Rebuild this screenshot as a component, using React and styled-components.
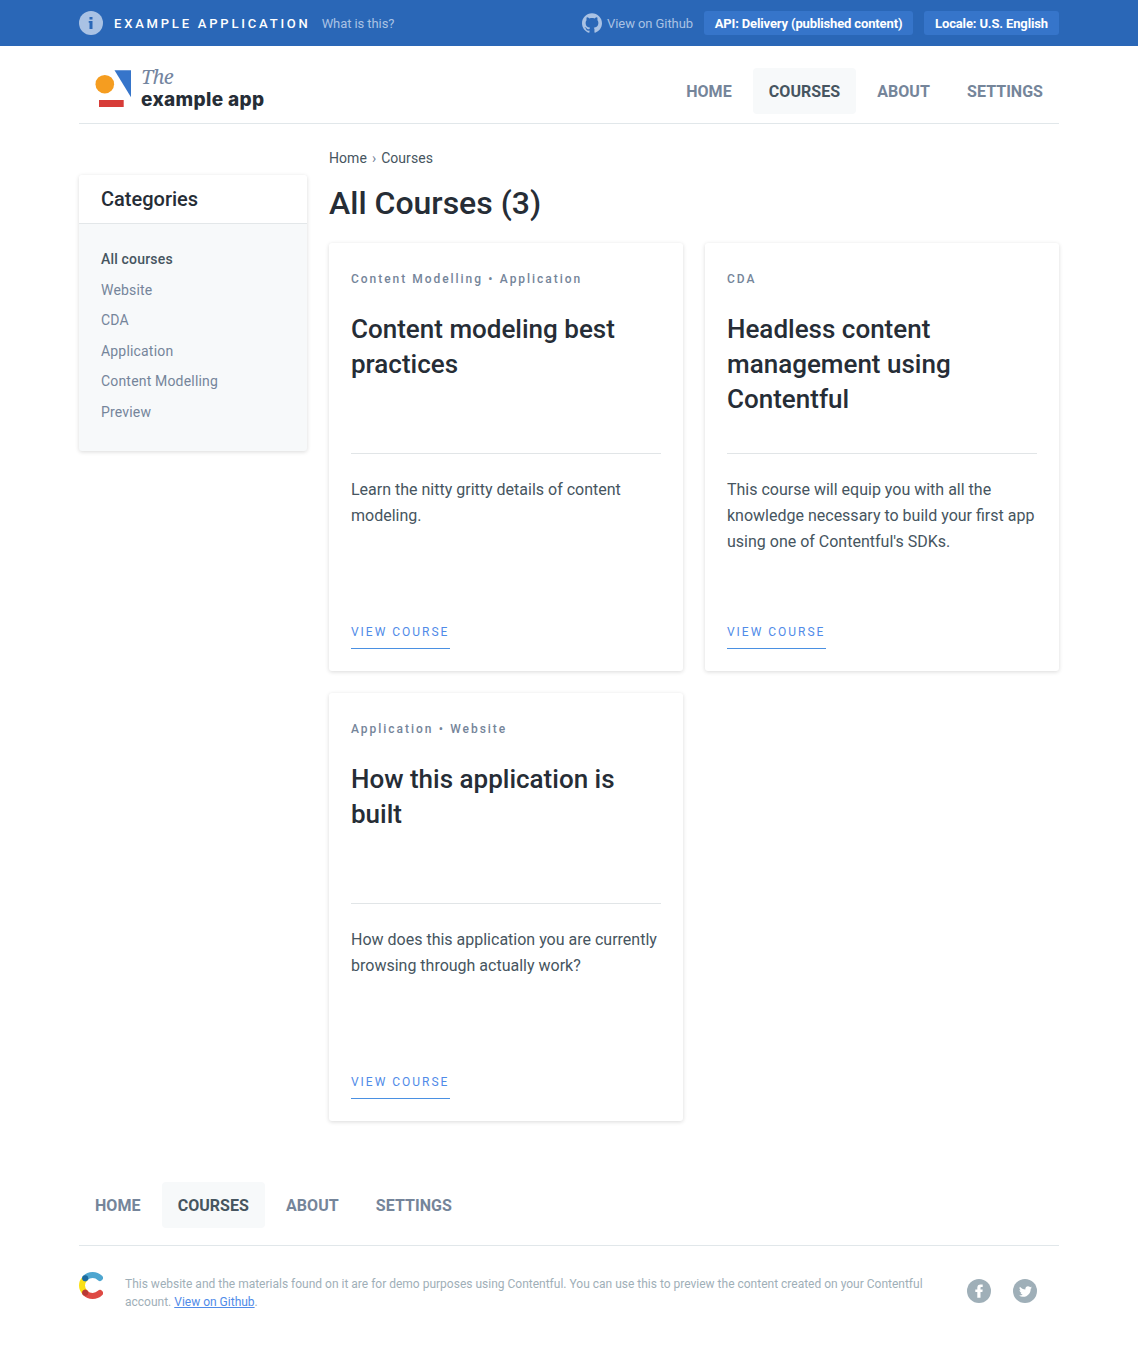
import React from 'react';
import styled, { createGlobalStyle } from 'styled-components';
import { FaTwitter } from 'react-icons/fa';
import { SiGithub } from 'react-icons/si';

const GlobalStyle = createGlobalStyle`
  *, *::before, *::after { box-sizing: border-box; }
  body {
    margin: 0;
    background: #fff;
    color: #465560;
    font-family: Roboto, "Liberation Sans", sans-serif;
    font-size: 16px;
  }
  h1, h2, p, ul { margin: 0; padding: 0; }
  ul { list-style: none; }
  a { color: inherit; text-decoration: none; }
`;

const Wrapper = styled.div`
  width: 980px;
  margin: 0 auto;
`;

const TopBar = styled.div`
  height: 46px;
  background: #2a67b7;
`;

const TopBarInner = styled(Wrapper)`
  height: 100%;
  display: flex;
  align-items: center;
  justify-content: space-between;
  font-size: 13px;
`;

const TopGroup = styled.div`
  display: flex;
  align-items: center;
  gap: 11px;
`;

const AppTitle = styled.span`
  color: #fff;
  font-size: 13px;
  font-weight: 500;
  letter-spacing: 2.8px;
  white-space: nowrap;
`;

const TopLink = styled.a`
  display: flex;
  align-items: center;
  gap: 5px;
  color: #a9c2e4;
  white-space: nowrap;
  letter-spacing: -0.08px;
`;

const TopButton = styled.button`
  height: 24px;
  width: ${({ $width }) => $width};
  padding: 0;
  border: 0;
  border-radius: 3px;
  background: #3675ca;
  color: #fff;
  font: 700 13px Roboto, sans-serif;
  letter-spacing: -0.14px;
  white-space: nowrap;
`;

const Header = styled(Wrapper)`
  height: 78px;
  padding: 22px 0 9px;
  display: flex;
  justify-content: space-between;
  border-bottom: 1px solid #e1e7ea;
`;

const Logo = styled.a`
  display: flex;
  padding-left: 16px;
  gap: 9px;
`;

const LogoMark = styled.svg`
  display: block;
  margin-top: 2px;
`;

const LogoText = styled.span`
  display: flex;
  flex-direction: column;
`;

const LogoThe = styled.span`
  font: italic 400 20px/18px "Noto Serif", "Liberation Serif", serif;
  letter-spacing: -0.8px;
  color: #7485a0;
`;

const LogoName = styled.span`
  font: 800 19px/27px Inter, sans-serif;
  letter-spacing: 0.35px;
  color: #262d36;
  white-space: nowrap;
`;

const Nav = styled.nav`
  display: flex;
  gap: 5.2px;
`;

const NavItem = styled.a`
  height: 46px;
  padding: 0 16px;
  border-radius: 4px;
  line-height: 47px;
  font-weight: 700;
  letter-spacing: 0.03px;
  background: ${({ $active }) => ($active ? '#f7f9fa' : 'transparent')};
  color: ${({ $active }) => ($active ? '#465560' : '#75859a')};
`;

const Layout = styled(Wrapper)`
  display: grid;
  grid-template-columns: 228px 730px;
  column-gap: 22px;
  align-items: start;
  padding-top: 22px;
`;

const Sidebar = styled.aside`
  margin-top: 29px;
  border-radius: 3px;
  overflow: hidden;
  background: #f7f9fa;
  box-shadow: 0 1px 4px rgba(0, 0, 0, 0.15);
`;

const SidebarTitle = styled.h2`
  height: 49px;
  padding: 0 22px;
  border-bottom: 1px solid #e3e7e9;
  background: #fff;
  color: #262d36;
  font-size: 20px;
  font-weight: 500;
  line-height: 48px;
`;

const CategoryList = styled.ul`
  height: 227px;
  padding: 20px 22px;
`;

const Category = styled.li`
  height: 30.5px;
  line-height: 30.5px;
  font-size: 14px;
  letter-spacing: 0.18px;
  font-weight: ${({ $active }) => ($active ? 500 : 400)};
  color: ${({ $active }) => ($active ? '#465560' : '#75859a')};
`;

const Breadcrumb = styled.div`
  display: flex;
  gap: 5px;
  height: 24px;
  line-height: 24px;
  font-size: 14px;
  letter-spacing: 0.05px;
`;

const Separator = styled.span`
  color: #75859a;
`;

const PageTitle = styled.h1`
  height: 42px;
  margin: 12px 0 19px;
  color: #262d36;
  font-size: 32px;
  font-weight: 500;
  line-height: 42px;
`;

const CardGrid = styled.div`
  display: grid;
  grid-template-columns: 354px 354px;
  gap: 22px;
`;

const Card = styled.article`
  height: 428px;
  padding: 22px;
  display: flex;
  flex-direction: column;
  align-items: flex-start;
  border-radius: 3px;
  background: #fff;
  box-shadow: 0 1px 4px rgba(0, 0, 0, 0.15);
`;

const Tags = styled.div`
  display: flex;
  gap: 5.3px;
  height: 28px;
  line-height: 28px;
  font-size: 12px;
  font-weight: 500;
  letter-spacing: 1.97px;
  color: #75859a;
`;

const CardTitle = styled.h2`
  width: 310px;
  height: 143px;
  padding-top: 19px;
  color: #262d36;
  font-size: 26px;
  font-weight: 500;
  line-height: 35px;
`;

const Divider = styled.div`
  width: 310px;
  height: 1px;
  margin-top: 17px;
  background: #e1e5e7;
`;

const Description = styled.p`
  flex: 1;
  width: 312px;
  padding-top: 23px;
  line-height: 26px;
`;

const CourseLink = styled.a`
  width: 99px;
  height: 29px;
  border-bottom: 1px solid #4a90e2;
  color: #508be8;
  font-size: 12px;
  line-height: 25px;
  letter-spacing: 1.98px;
  white-space: nowrap;
`;

const Footer = styled.footer`
  padding-top: 61px;
`;

const FooterNav = styled(Wrapper)`
  height: 64px;
  border-bottom: 1px solid #e1e7ea;
`;

const FooterBody = styled(Wrapper)`
  display: flex;
  align-items: flex-start;
  padding-top: 26px;
`;

const FooterText = styled.p`
  width: 820px;
  margin-left: 22px;
  padding-top: 3px;
  color: #9fafb8;
  font-size: 12px;
  line-height: 18px;
`;

const InlineLink = styled.a`
  color: #508be8;
  text-decoration: underline;
`;

const Socials = styled.div`
  display: flex;
  gap: 22px;
  margin: 7px 22px 0 auto;
`;

const Social = styled.a`
  display: grid;
  place-items: center;
  width: 24px;
  height: 24px;
  border-radius: 50%;
  background: #9fafb8;
  color: #fff;
`;

const InfoIcon = () => (
  <svg width="24" height="24" viewBox="0 0 24 24">
    <circle cx="12" cy="12" r="12" fill="#a9c2e4" />
    <path d="M10.500 6h3v2.500h-3zM9.700 10h3.800v8h-3v-6.200h-.8z" fill="#2a67b7" />
  </svg>
);

const AppMark = () => (
  <LogoMark width="37" height="38" viewBox="0 0 37 38">
    <circle cx="9.8" cy="14.2" r="9.3" fill="#f59d20" />
    <path d="M19.500 0.300H36v27z" fill="#3675ca" />
    <path d="M4 30h24.700v7H4z" fill="#d73c38" />
  </LogoMark>
);

const ContentfulMark = () => (
  <svg width="24" height="28" viewBox="0 0 24 28" fill="none" strokeWidth="6" strokeLinecap="round">
    <path d="M6.200 6.400Q3 9.500 3 13.500t3.200 7.100" stroke="#fae015" />
    <path d="M6.200 6.200A10.500 10.500 0 0 1 21 6" stroke="#4ea6d0" />
    <path d="M6.200 20.800A10.500 10.500 0 0 0 21 21" stroke="#de4a44" />
    <circle cx="6.200" cy="6.200" r="3" fill="#1c6a9e" />
    <circle cx="6.200" cy="20.800" r="3" fill="#b83a35" />
  </svg>
);

const FacebookIcon = () => (
  <svg width="24" height="24" viewBox="0 0 24 24">
    <path
      d="M10.300 18.800v-5.800H8.300v-2.600h2V8.700c0-2.100 1.200-3.300 3.200-3.300h2.200v2.600h-1.200c-.8 0-1 .4-1 1v1.400h2.200l-.3 2.600h-1.900v5.800z"
      fill="currentColor"
    />
  </svg>
);

const PAGES = ['HOME', 'COURSES', 'ABOUT', 'SETTINGS'];
const CATEGORIES = ['All courses', 'Website', 'CDA', 'Application', 'Content Modelling', 'Preview'];
const COURSES = [
  {
    tags: ['Content Modelling', 'Application'],
    title: 'Content modeling best practices',
    text: 'Learn the nitty gritty details of content modeling.',
  },
  {
    tags: ['CDA'],
    title: 'Headless content management using Contentful',
    text: "This course will equip you with all the knowledge necessary to build your first app using one of Contentful's SDKs.",
  },
  {
    tags: ['Application', 'Website'],
    title: 'How this application is built',
    text: 'How does this application you are currently browsing through actually work?',
  },
];

const MainNav = () => (
  <Nav>
    {PAGES.map((page) => (
      <NavItem key={page} $active={page === 'COURSES'}>{page}</NavItem>
    ))}
  </Nav>
);

const CourseCard = ({ tags, title, text }) => (
  <Card>
    <Tags>
      {tags.map((tag, i) => (
        <React.Fragment key={tag}>
          {i > 0 && <span>•</span>}
          <span>{tag}</span>
        </React.Fragment>
      ))}
    </Tags>
    <CardTitle>{title}</CardTitle>
    <Divider />
    <Description>{text}</Description>
    <CourseLink>VIEW COURSE</CourseLink>
  </Card>
);

export default function App() {
  return (
    <>
      <GlobalStyle />
      <TopBar>
        <TopBarInner>
          <TopGroup>
            <InfoIcon />
            <AppTitle>EXAMPLE APPLICATION</AppTitle>
            <TopLink>What is this?</TopLink>
          </TopGroup>
          <TopGroup>
            <TopLink><SiGithub size={20} />View on Github</TopLink>
            <TopButton $width="209px">API: Delivery (published content)</TopButton>
            <TopButton $width="135px">Locale: U.S. English</TopButton>
          </TopGroup>
        </TopBarInner>
      </TopBar>
      <Header as="header">
        <Logo>
          <AppMark />
          <LogoText>
            <LogoThe>The</LogoThe>
            <LogoName>example app</LogoName>
          </LogoText>
        </Logo>
        <MainNav />
      </Header>
      <Layout>
        <Sidebar>
          <SidebarTitle>Categories</SidebarTitle>
          <CategoryList>
            {CATEGORIES.map((name, i) => (
              <Category key={name} $active={i === 0}>{name}</Category>
            ))}
          </CategoryList>
        </Sidebar>
        <main>
          <Breadcrumb>
            <span>Home</span>
            <Separator>›</Separator>
            <span>Courses</span>
          </Breadcrumb>
          <PageTitle>All Courses (3)</PageTitle>
          <CardGrid>
            {COURSES.map((course) => (
              <CourseCard key={course.title} {...course} />
            ))}
          </CardGrid>
        </main>
      </Layout>
      <Footer>
        <FooterNav>
          <MainNav />
        </FooterNav>
        <FooterBody>
          <ContentfulMark />
          <FooterText>
            This website and the materials found on it are for demo purposes using Contentful. You can use this to
            preview the content created on your Contentful account. <InlineLink>View on Github</InlineLink>.
          </FooterText>
          <Socials>
            <Social><FacebookIcon /></Social>
            <Social><FaTwitter size={13} /></Social>
          </Socials>
        </FooterBody>
      </Footer>
    </>
  );
}
